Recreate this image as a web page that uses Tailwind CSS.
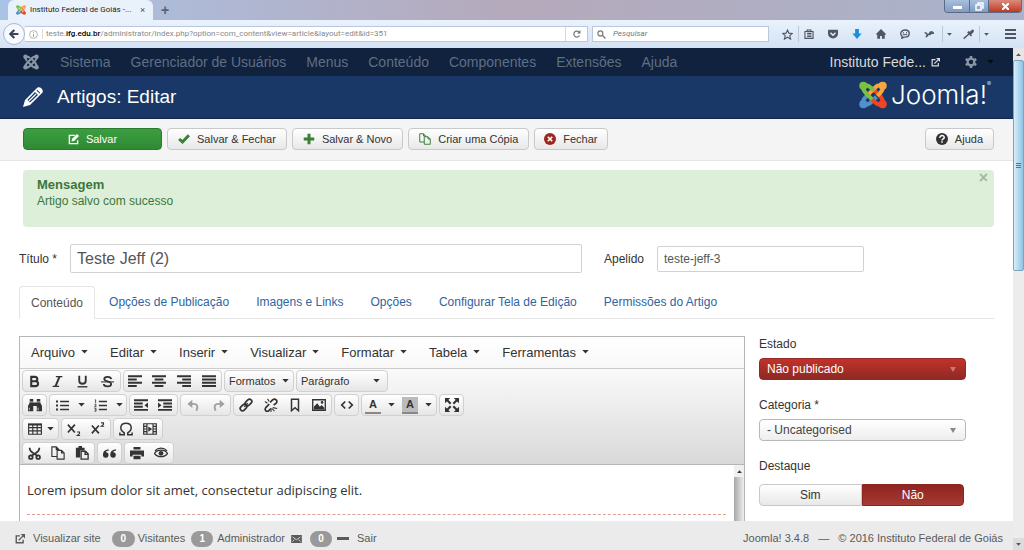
<!DOCTYPE html>
<html lang="pt-BR">
<head>
<meta charset="utf-8">
<title>Instituto Federal de Goiás - Artigos: Editar</title>
<script src="https://cdn.jsdelivr.net/npm/@tailwindcss/browser@4"></script>
</head>
<body class="flex h-screen flex-col overflow-hidden bg-white font-['Liberation_Sans',Arial,sans-serif] text-xs text-[#333]">

<svg class="hidden" xmlns="http://www.w3.org/2000/svg">
  <symbol id="joomla" viewBox="0 0 32 32">
    <g fill="none" stroke="currentColor" stroke-width="4">
      <path d="M5 26 C4 21 6 20 9 17 L18 8 M5 27 C10 28 12 26 14 24 L23 15 M27 27 C22 28 20 26 18 24 L9 15 M27 26 C28 21 26 20 24 17 L15 8"/>
      <path d="M27 6 C28 10 26 12 24 14 M27 5 C21 4 20 6 17 9 M5 5 C10 4 12 6 14 8 M5 6 C4 10 6 12 8 14"/>
    </g>
    <g fill="currentColor"><circle cx="5" cy="5.500" r="4.500"/><circle cx="27" cy="5.500" r="4.500"/><circle cx="5" cy="26.500" r="4.500"/><circle cx="27" cy="26.500" r="4.500"/></g>
  </symbol>
  <symbol id="joomla-color" viewBox="0 0 32 32">
    <g fill="none" stroke-width="4.600">
      <path stroke="#5091cd" d="M5 26 C4 21 6 20 9 17 L11 15 M5 27 C10 28 12 26 14 24 L20 18"/>
      <path stroke="#f44321" d="M27 27 C22 28 20 26 18 24 L14 20 M27 26 C28 21 26 20 24 17 L18 11"/>
      <path stroke="#f9a541" d="M27 6 C28 10 26 12 24 14 L21 17 M27 5 C21 4 20 6 17 9 L11 15"/>
      <path stroke="#7ac143" d="M5 5 C10 4 12 6 14 8 L17 11 M5 6 C4 10 6 12 8 14 L15 21"/>
    </g>
    <circle cx="5" cy="5.500" r="4.700" fill="#7ac143"/><circle cx="27" cy="5.500" r="4.700" fill="#f9a541"/><circle cx="5" cy="26.500" r="4.700" fill="#5091cd"/><circle cx="27" cy="26.500" r="4.700" fill="#f44321"/>
  </symbol>
  <symbol id="caret" viewBox="0 0 8 5"><path fill="currentColor" d="M0 0h8L4 4.500z"/></symbol>
  <symbol id="external" viewBox="0 0 16 16"><path fill="none" stroke="currentColor" stroke-width="2.200" d="M8 3H2v11h11V9M6 10l7-7"/><path fill="currentColor" d="M9 0h7v7z"/></symbol>
  <symbol id="gear" viewBox="0 0 16 16"><circle cx="8" cy="8" r="4.500" fill="none" stroke="currentColor" stroke-width="3"/><path stroke="currentColor" stroke-width="3.400" d="M8 0v3M8 13v3M1 4l2.600 1.500M12.400 10.500L15 12M1 12l2.600-1.500M12.400 5.500L15 4"/></symbol>
  <symbol id="pencil" viewBox="0 0 20 20"><path fill="currentColor" fill-rule="evenodd" d="M0 20l2-7L13.500 1.500c1.500-2 3.500-1.500 5 0s2 3.500 0 5L7 18zM4.500 13l2.500 2.500L15 8l-3-3zM13.500 3.500l3 3 .7-.7-3-3z"/><path stroke="currentColor" stroke-width="1.200" d="M6 14l7-7"/></symbol>
  <symbol id="edit" viewBox="0 0 16 16"><path fill="none" stroke="currentColor" stroke-width="2" d="M10 2H2v12h12V9"/><path fill="currentColor" d="M5 11l1-4 7-7 3 3-7 7z"/></symbol>
  <symbol id="check" viewBox="0 0 16 16"><path fill="none" stroke="currentColor" stroke-width="4" d="M1.500 8L6 12 14.500 3"/></symbol>
  <symbol id="plus" viewBox="0 0 16 16"><path stroke="currentColor" stroke-width="4" d="M8 1v14M1 8h14"/></symbol>
  <symbol id="copy" viewBox="0 0 16 16"><path fill="none" stroke="currentColor" stroke-width="1.300" d="M7 12H1V1h5l3 3v1M6 1v3h3M7 5h5l3 3v7H7zM12 5v3h3"/></symbol>
  <symbol id="cancel" viewBox="0 0 16 16"><circle cx="8" cy="8" r="8" fill="currentColor"/><path stroke="#fff" stroke-width="2.200" d="M5 5l6 6M11 5l-6 6"/></symbol>
  <symbol id="help" viewBox="0 0 16 16"><circle cx="8" cy="8" r="8" fill="currentColor"/><path fill="none" stroke="#fff" stroke-width="2" d="M5.200 6.500C5 2.500 11 2.500 11 6c0 2-3 1.500-3 4M8 11v2"/></symbol>
  <symbol id="bold" viewBox="0 0 16 16"><path fill="none" stroke="currentColor" stroke-width="2.600" d="M4 2.300h4.500c4 0 4 5.400 0 5.400H4zM4 7.700h5c4.500 0 4.500 6 0 6H4z"/></symbol>
  <symbol id="italic" viewBox="0 0 16 16"><path fill="none" stroke="currentColor" stroke-width="1.800" d="M6 2h8M2 14h8"/><path stroke="currentColor" stroke-width="2.400" d="M10.500 2l-5 12"/></symbol>
  <symbol id="underline" viewBox="0 0 16 16"><path fill="none" stroke="currentColor" stroke-width="2.300" d="M4 1v6c0 5 8 5 8 0V1"/><path stroke="currentColor" stroke-width="1.700" d="M2 14.500h12"/></symbol>
  <symbol id="strike" viewBox="0 0 16 16"><path fill="none" stroke="currentColor" stroke-width="2.200" d="M12.500 5C12 1 4 1.500 4 5c0 3.500 8.500 2 8.500 6 0 4-9 4-9 0"/><path stroke="currentColor" stroke-width="1.300" d="M0 8.500h16"/></symbol>
  <symbol id="al" viewBox="0 0 16 16"><path stroke="currentColor" stroke-width="2.300" d="M0 2.500h16M0 6.200h10M0 9.900h16M0 13.600h10"/></symbol>
  <symbol id="ac" viewBox="0 0 16 16"><path stroke="currentColor" stroke-width="2.300" d="M0 2.500h16M3 6.200h10M0 9.900h16M3 13.600h10"/></symbol>
  <symbol id="ar" viewBox="0 0 16 16"><path stroke="currentColor" stroke-width="2.300" d="M0 2.500h16M6 6.200h10M0 9.900h16M6 13.600h10"/></symbol>
  <symbol id="aj" viewBox="0 0 16 16"><path stroke="currentColor" stroke-width="2.300" d="M0 2.500h16M0 6.200h16M0 9.900h16M0 13.600h16"/></symbol>
  <symbol id="find" viewBox="0 0 16 16"><path fill="currentColor" d="M2 1h4v4h4V1h4v4l2 4v6h-6V9H6v6H0V9l2-4z"/><path stroke="#f4f4f4" stroke-width=".8" d="M2 4.500h4M10 4.500h4M1.500 11v3M11.500 11v3"/></symbol>
  <symbol id="ul" viewBox="0 0 16 16"><path stroke="currentColor" stroke-width="1.700" d="M5 3h11M5 8h11M5 13h11"/><path stroke="currentColor" stroke-width="2.500" d="M0 3h2.500M0 8h2.500M0 13h2.500"/></symbol>
  <symbol id="ol" viewBox="0 0 16 16"><path stroke="currentColor" stroke-width="1.700" d="M6 3h10M6 8h10M6 13h10"/><path fill="none" stroke="currentColor" d="M1 1h1v4M.5 6.500h2v1.500l-2 1.500h2.500M.5 11.500h2v3.500h-2M1 13.300h1.500"/></symbol>
  <symbol id="outdent" viewBox="0 0 16 16"><path stroke="currentColor" stroke-width="2.200" d="M0 2.500h16M0 6.200h10M0 9.900h10M0 13.600h16"/><path fill="currentColor" d="M16 5v6.500l-4-3.200z"/></symbol>
  <symbol id="indent" viewBox="0 0 16 16"><path stroke="currentColor" stroke-width="2.200" d="M0 2.500h16M6 6.200h10M6 9.900h10M0 13.600h16"/><path fill="currentColor" d="M0 5v6.500l4-3.200z"/></symbol>
  <symbol id="undo" viewBox="0 0 16 16"><path fill="none" stroke="currentColor" stroke-width="2.400" d="M4 6h4c5 0 6 4 3.500 8.500"/><path fill="currentColor" d="M6.500 1v10L.5 6z"/></symbol>
  <symbol id="redo" viewBox="0 0 16 16"><path fill="none" stroke="currentColor" stroke-width="2.400" d="M12 6H8c-5 0-6 4-3.500 8.500"/><path fill="currentColor" d="M9.500 1v10l6-5z"/></symbol>
  <symbol id="link" viewBox="0 0 16 16"><g fill="none" stroke="currentColor" stroke-width="1.900"><rect x="-4" y="-2.600" width="8.500" height="5.200" rx="2.600" transform="translate(5 11) rotate(-45)"/><rect x="-4.500" y="-2.600" width="8.500" height="5.200" rx="2.600" transform="translate(11 5) rotate(-45)"/><path d="M6 10l4-4"/></g></symbol>
  <symbol id="unlink" viewBox="0 0 16 16"><path fill="none" stroke="currentColor" stroke-width="1.900" d="M7 5l3-3c3-2 6 1 4 4l-3 2M6 7L2 11c-2 3 1 5 3 4l3-3"/><path stroke="currentColor" stroke-width="1.200" d="M4 1l2 3M1 4l3 2M10 11l5 1M9 12l3 3M8 12v4"/></symbol>
  <symbol id="bookmark" viewBox="0 0 16 16"><path fill="none" stroke="currentColor" stroke-width="1.700" d="M4 1.500h8v13L8 11l-4 3.500z"/></symbol>
  <symbol id="image" viewBox="0 0 16 16"><path fill="none" stroke="currentColor" stroke-width="1.500" d="M.8 2h14.400v12H.8z"/><path fill="currentColor" d="M2 13V10l4-4 3 4 2-2 3 3v2z"/><circle cx="11.500" cy="5" r="1.500" fill="currentColor"/></symbol>
  <symbol id="code" viewBox="0 0 16 16"><path fill="none" stroke="currentColor" stroke-width="2" d="M6 4L2 8l4 4M10 4l4 4-4 4"/></symbol>
  <symbol id="full" viewBox="0 0 16 16"><path fill="currentColor" d="M0 0h6L0 6zM16 0v6l-6-6zM0 16v-6l6 6zM16 16h-6l6-6z"/><path stroke="currentColor" stroke-width="2.400" d="M2 2l4.500 4.500M14 2L9.500 6.500M2 14l4.500-4.500M14 14L9.500 9.500"/></symbol>
  <symbol id="table" viewBox="0 0 16 16"><path fill="none" stroke="currentColor" stroke-width="1.300" d="M.7 2.500h14.600v11.500H.7zM1 6.500h14M1 10.200h14M5.500 3v11M10.500 3v11"/><path stroke="currentColor" stroke-width="2" d="M0 3h16"/></symbol>
  <symbol id="sub" viewBox="0 0 16 16"><path fill="none" stroke="currentColor" stroke-width="1.900" d="M1 3l8 9M9 3l-8 9"/><path fill="none" stroke="currentColor" stroke-width="1.200" d="M11.500 11.500h2.800v1.700l-2.600 2.200h3.300"/></symbol>
  <symbol id="sup" viewBox="0 0 16 16"><path fill="none" stroke="currentColor" stroke-width="1.900" d="M1 4l8 9M9 4l-8 9"/><path fill="none" stroke="currentColor" stroke-width="1.200" d="M11.500 1h2.800v1.700l-2.600 2.200h3.300"/></symbol>
  <symbol id="omega" viewBox="0 0 16 16"><path fill="none" stroke="currentColor" stroke-width="1.700" d="M1 12v2.500h5v-2C0 9 1 1.500 8 1.500s8 7.500 2 11v2h5V12"/></symbol>
  <symbol id="video" viewBox="0 0 16 16"><path fill="none" stroke="currentColor" stroke-width="1.400" d="M.8 2h14.400v12H.8zM4.500 2v12M11.500 2v12M1 5h3M1 8h3M1 11h3M12 5h3M12 8h3M12 11h3"/><path fill="currentColor" d="M6 5l4.500 3L6 11z"/></symbol>
  <symbol id="cut" viewBox="0 0 16 16"><g fill="none" stroke="currentColor" stroke-width="2.200"><path d="M2 1c0 4 2 5 10 10M14 1c0 4-2 5-10 10"/><circle cx="3.500" cy="12.500" r="2.200"/><circle cx="12.500" cy="12.500" r="2.200"/></g></symbol>
  <symbol id="paste" viewBox="0 0 16 16"><path fill="currentColor" d="M1 2h3V0h4v2h3v3H6v8H1z"/><path fill="none" stroke="currentColor" stroke-width="1.500" d="M7 6h5l3 3v6H7zM11.500 6v3.500H15"/></symbol>
  <symbol id="quote" viewBox="0 0 16 16"><path fill="currentColor" d="M7 3C2 3 0 6 0 9.500a3.400 3.400 0 103.500-3C4 5 5 4.500 7 4.500zM16 3c-5 0-7 3-7 6.500a3.400 3.400 0 103.500-3c.5-1.500 1.500-2 3.500-2z"/></symbol>
  <symbol id="print" viewBox="0 0 16 16"><path fill="currentColor" d="M4 1h8v3H4zM0 5h16v7h-3v-2H3v2H0zM4 11h8v4H4z"/></symbol>
  <symbol id="eye" viewBox="0 0 16 16"><path fill="none" stroke="currentColor" stroke-width="1.400" d="M.5 8.500C4 3.500 12 3.500 15.500 8.500 12 13.500 4 13.500.5 8.500zM1 5.500C5 1.500 11 1.500 15 5.500"/><circle cx="8" cy="8.300" r="2.700" fill="currentColor"/></symbol>
  <symbol id="mail" viewBox="0 0 16 12"><path fill="currentColor" d="M0 0h16v12H0z"/><path fill="none" stroke="#ebebeb" stroke-width="1.200" d="M2 3l6 4 6-4M2 10l3-3M14 10l-3-3"/></symbol>
  <symbol id="star" viewBox="0 0 16 16"><path fill="none" stroke="currentColor" stroke-width="1.600" d="M8 1.500l2 4.500 5 .5-3.700 3.200 1.200 5L8 12l-4.500 2.700 1.200-5L1 6.500 6 6z"/></symbol>
  <symbol id="clip" viewBox="0 0 16 16"><path fill="none" stroke="currentColor" stroke-width="1.800" d="M1.500 4h13v11h-13zM5 4V1.500h6V4M5 7h7M5 9.500h7M5 12h7"/></symbol>
  <symbol id="pocket" viewBox="0 0 16 16"><path fill="currentColor" d="M1 1h14q1 0 1 1v5a8 8 0 01-16 0V2q0-1 1-1z"/><path fill="none" stroke="#e6effa" stroke-width="2.200" d="M4 6l4 4 4-4"/></symbol>
  <symbol id="down" viewBox="0 0 16 16"><path fill="currentColor" d="M5 0h6v7h4.500L8 16 .5 7H5z"/></symbol>
  <symbol id="home" viewBox="0 0 16 16"><path fill="currentColor" d="M8 0l8 8-1.500 1.500L14 9v6.500H9.500V11h-3v4.500H2V9l-.5.500L0 8z"/></symbol>
  <symbol id="chat" viewBox="0 0 16 16"><path fill="none" stroke="currentColor" stroke-width="2.200" d="M8 1.500c9 0 9 11.500 0 11.500H6l-3 2 .5-3C-1 8 2 1.500 8 1.500z"/><path stroke="currentColor" stroke-width="1.600" d="M5.500 5v2M10.500 5v2M4.500 9h7"/></symbol>
  <symbol id="spray" viewBox="0 0 16 16"><path fill="currentColor" d="M0 5h4l1 2h3l1-3 5-1v2h2v3h-4l-2 2H7l-2 3H2l2-4z"/></symbol>
  <symbol id="dropper" viewBox="0 0 16 16"><path stroke="currentColor" stroke-width="2" d="M1 14l8-7"/><path fill="currentColor" d="M6 5l2-2 2 1 2.500-2.500c1-1 2.500-1 3 0s.5 2 0 3L12 8l1 2-1.500 1z"/></symbol>
</svg>

<!-- Window frame and tab strip -->
<header class="shrink-0">
  <div class="flex h-5 items-start justify-between bg-linear-to-r from-[#a9c3e6] via-[#b5a9bb] to-[#a9b3cb]">
    <div class="flex h-5 items-center">
      <div class="ml-2 flex h-5 w-[145px] items-center gap-1 rounded-t-md bg-[#e9f1fb] px-2 font-['Roboto',sans-serif] text-[8px] text-[#222]">
        <svg class="size-[10px] shrink-0"><use href="#joomla-color"/></svg>
        <span class="grow whitespace-nowrap">Instituto Federal de Goiás -...</span>
        <button class="text-[9px] text-[#555]" aria-label="Fechar aba">×</button>
      </div>
      <button class="ml-1 px-1 text-sm font-bold text-[#5b6274]" aria-label="Nova aba">+</button>
    </div>
    <div class="mr-[2px] flex h-[13px] overflow-hidden rounded-b-sm border border-t-0 border-[#5b6b86]">
      <button class="flex w-6 items-end justify-center bg-linear-to-b from-[#a9bfdd] to-[#7f9cc4] pb-[3px]" aria-label="Minimizar"><span class="h-[3px] w-[9px] bg-white"></span></button>
      <button class="flex w-5 items-center justify-center border-x border-[#5b6b86] bg-linear-to-b from-[#a9bfdd] to-[#7f9cc4]" aria-label="Restaurar"><svg class="size-[9px]" viewBox="0 0 9 9"><path fill="none" stroke="#fff" stroke-width="1.500" d="M3 2.500V1h5v5H7M1 3h5v5H1z"/></svg></button>
      <button class="flex w-8 items-center justify-center bg-linear-to-b from-[#d98a7c] to-[#c0351c] text-white" aria-label="Fechar"><svg class="size-[7px]" viewBox="0 0 8 8"><path stroke="currentColor" stroke-width="2.400" d="M0 0l8 8M8 0L0 8"/></svg></button>
    </div>
  </div>
  <div class="flex h-[28px] items-center bg-linear-to-b from-[#eaf2fc] to-[#d3e2f4] pr-2 font-['Roboto',sans-serif] text-[8px] text-[#888]">
    <button class="ml-[3px] flex size-[22px] shrink-0 items-center justify-center rounded-full border border-[#a9b8cc] bg-[#f6f9fd] text-[#3b4252]" aria-label="Voltar"><svg class="size-[10px]" viewBox="0 0 16 16"><path fill="none" stroke="currentColor" stroke-width="3.500" d="M15 8H3M8.500 1.500L2 8l6.500 6.500"/></svg></button>
    <div class="flex h-[16px] min-w-0 grow items-center border border-l-0 border-[#b9c8da] bg-white pl-1">
      <svg class="size-[9px] shrink-0" viewBox="0 0 16 16"><circle cx="8" cy="8" r="7" fill="none" stroke="#999" stroke-width="1.300"/><path stroke="#999" stroke-width="1.600" d="M8 7v5M8 4v1.500"/></svg>
      <span class="ml-1 h-[10px] w-px bg-[#ddd]"></span>
      <span class="ml-[3px] grow truncate">teste.<b class="font-medium text-black">ifg.edu.br</b>/administrator/index.php?option=com_content&amp;view=article&amp;layout=edit&amp;id=351</span>
      <button class="flex h-full w-[22px] items-center justify-center border-l border-[#cfdbe8] text-[#777]" aria-label="Recarregar"><svg class="size-[8px]" viewBox="0 0 16 16"><path fill="none" stroke="currentColor" stroke-width="2.400" d="M12 4a6 6 0 101 7"/><path fill="currentColor" d="M15 0v7H8z"/></svg></button>
    </div>
    <label class="ml-1 flex h-[16px] w-[177px] shrink-0 items-center gap-[7px] border border-[#b9c8da] bg-white px-1">
      <svg class="size-[9px] shrink-0" viewBox="0 0 16 16"><circle cx="6" cy="6" r="4.500" fill="none" stroke="#777" stroke-width="2"/><path stroke="#777" stroke-width="2.400" d="M9.500 9.500L15 15"/></svg>
      <input class="w-full italic outline-none placeholder:text-[#777]" type="search" placeholder="Pesquisar" aria-label="Pesquisar">
    </label>
    <div class="ml-[13px] flex shrink-0 items-center text-[#4f5663]">
      <button aria-label="Favoritar"><svg class="size-[11px]"><use href="#star"/></svg></button>
      <span class="mx-[5px] h-4 w-px bg-[#b9c8da]"></span>
      <div class="flex items-center gap-[14px]">
        <button aria-label="Favoritos"><svg class="size-[10px]"><use href="#clip"/></svg></button>
        <button aria-label="Pocket"><svg class="size-[10px]"><use href="#pocket"/></svg></button>
        <button class="text-[#1c8fdc]" aria-label="Downloads"><svg class="size-[10px]"><use href="#down"/></svg></button>
        <button aria-label="Início"><svg class="size-[10px]"><use href="#home"/></svg></button>
        <button aria-label="Hello"><svg class="size-[10px]"><use href="#chat"/></svg></button>
        <button aria-label="Extensão"><svg class="size-[10px]"><use href="#spray"/></svg></button>
      </div>
      <span class="ml-[8px] h-4 w-px bg-[#b9c8da]"></span>
      <svg class="ml-1 h-[3px] w-[5px]"><use href="#caret"/></svg>
      <button class="ml-[11px]" aria-label="Conta-gotas"><svg class="size-[11px]"><use href="#dropper"/></svg></button>
      <span class="ml-[5px] h-4 w-px bg-[#b9c8da]"></span>
      <svg class="ml-1 h-[3px] w-[5px]"><use href="#caret"/></svg>
      <button class="ml-[16px]" aria-label="Menu"><svg class="h-[10px] w-[11px]" viewBox="0 0 11 10"><path stroke="currentColor" stroke-width="2" d="M0 1h11M0 5h11M0 9h11"/></svg></button>
    </div>
  </div>
</header>

<div class="flex min-h-0 grow">
<div class="flex min-w-0 grow flex-col">

  <!-- Admin navigation -->
  <nav class="flex h-[28px] shrink-0 items-center bg-[#10223e] pl-[23px] pr-[19px] text-sm text-[#5f6e84]">
    <a href="#" class="text-[#8b97a8]" aria-label="Painel"><svg class="size-4"><use href="#joomla"/></svg></a>
    <div class="ml-[21px] flex gap-[20px] whitespace-nowrap">
      <a href="#">Sistema</a><a href="#">Gerenciador de Usuários</a><a href="#">Menus</a><a href="#">Conteúdo</a><a href="#">Componentes</a><a href="#">Extensões</a><a href="#">Ajuda</a>
    </div>
    <a href="#" class="ml-auto flex items-center gap-[5px] text-[#d9d9d9]">Instituto Fede... <svg class="size-[9px]"><use href="#external"/></svg></a>
    <button class="ml-[25px] flex items-center gap-[10px] text-[#8b97a8]" aria-label="Configurações"><svg class="size-[12px]"><use href="#gear"/></svg><svg class="h-[4px] w-[7px] text-[#040a14]"><use href="#caret"/></svg></button>
  </nav>
  <div class="flex h-[43px] shrink-0 items-center border-b border-[#11264a] bg-[#1a3867] pl-[23px] pr-[22px] text-white">
    <svg class="size-5"><use href="#pencil"/></svg>
    <h1 class="ml-[14px] text-[19px]">Artigos: Editar</h1>
    <div class="ml-auto flex items-center gap-1 pb-1">
      <svg class="size-7"><use href="#joomla-color"/></svg>
      <span class="flex items-start font-['Inter',sans-serif] text-[26px] leading-7 font-light">Joomla!<sup class="text-[6px] leading-3">®</sup></span>
    </div>
  </div>

  <!-- Action toolbar -->
  <div class="flex shrink-0 items-start gap-[5px] border-b border-[#e6e6e6] bg-[#f4f4f4] pt-[9px] pr-[19px] pb-[10px] pl-[23px] text-[11px] leading-5">
    <button class="flex h-[22px] w-[139px] items-center justify-center gap-[7px] rounded-sm border border-[#2a7a2d] bg-linear-to-b from-[#3c9e40] to-[#2f8a33] text-white"><svg class="size-[11px]"><use href="#edit"/></svg>Salvar</button>
    <button class="flex h-[22px] items-center gap-[7px] rounded-sm border border-[#c9c9c9] bg-linear-to-b from-white to-[#e8e8e8] px-[10px]"><svg class="size-[12px] text-[#378137]"><use href="#check"/></svg>Salvar &amp; Fechar</button>
    <button class="flex h-[22px] items-center gap-[7px] rounded-sm border border-[#c9c9c9] bg-linear-to-b from-white to-[#e8e8e8] px-[10px]"><svg class="size-[12px] text-[#378137]"><use href="#plus"/></svg>Salvar &amp; Novo</button>
    <button class="flex h-[22px] items-center gap-[7px] rounded-sm border border-[#c9c9c9] bg-linear-to-b from-white to-[#e8e8e8] px-[10px]"><svg class="size-[12px] text-[#378137]"><use href="#copy"/></svg>Criar uma Cópia</button>
    <button class="flex h-[22px] items-center gap-[7px] rounded-sm border border-[#c9c9c9] bg-linear-to-b from-white to-[#e8e8e8] px-[9px]"><svg class="size-[12px] text-[#9d261d]"><use href="#cancel"/></svg>Fechar</button>
    <button class="ml-auto flex h-[22px] items-center gap-[7px] rounded-sm border border-[#c9c9c9] bg-linear-to-b from-white to-[#e8e8e8] px-[10px]"><svg class="size-[12px]"><use href="#help"/></svg>Ajuda</button>
  </div>

  <main class="min-h-0 grow overflow-hidden pr-[19px] pl-[19px]">
    <div class="mt-[9px] ml-1 flex h-[57px] items-start justify-between rounded-sm bg-[#ddefd8] pt-[7px] pr-[6px] pl-[14px] leading-4 text-[#3c763d]" role="alert">
      <div><h4 class="text-[13px] font-bold">Mensagem</h4><p>Artigo salvo com sucesso</p></div>
      <button class="mt-[-5px] text-base leading-3 font-bold text-[#a5b8a2]" aria-label="Fechar mensagem">×</button>
    </div>

    <div class="mt-[17px] flex h-[29px] items-center">
      <label for="titulo" class="w-[51px]">Título *</label>
      <input id="titulo" value="Teste Jeff (2)" class="h-[29px] w-[512px] rounded-xs border border-[#d2d2d2] px-[6px] text-base text-[#555] outline-none">
      <label for="apelido" class="ml-[22px] w-[53px]">Apelido</label>
      <input id="apelido" value="teste-jeff-3" class="h-[26px] w-[207px] rounded-xs border border-[#d2d2d2] px-[6px] text-[#555] outline-none">
    </div>

    <div class="mt-[13px] flex h-[33px] items-end border-b border-[#e4e4e4] whitespace-nowrap text-[#2f64a0]" role="tablist">
      <a href="#" class="-mb-px flex h-[33px] items-center rounded-t-sm border border-b-white border-[#e4e4e4] bg-white px-[11px] text-[#555]" role="tab" aria-selected="true">Conteúdo</a>
      <div class="ml-[14px] flex h-[33px] items-center gap-[27px]">
        <a href="#" role="tab">Opções de Publicação</a><a href="#" role="tab">Imagens e Links</a><a href="#" role="tab">Opções</a><a href="#" role="tab">Configurar Tela de Edição</a><a href="#" role="tab">Permissões do Artigo</a>
      </div>
    </div>

    <div class="mt-[17px] flex gap-[14px]">
      <!-- Rich text editor -->
      <section class="w-[726px] shrink-0 border border-[#b5b5b5]">
        <div class="flex h-[32px] items-center gap-[22px] border-b border-[#ccc] bg-linear-to-b from-white to-[#f8f8f8] pl-[11px] text-[13px]">
          <button class="flex items-center gap-[6px]">Arquivo <svg class="h-[4px] w-[7px]"><use href="#caret"/></svg></button>
          <button class="flex items-center gap-[6px]">Editar <svg class="h-[4px] w-[7px]"><use href="#caret"/></svg></button>
          <button class="flex items-center gap-[6px]">Inserir <svg class="h-[4px] w-[7px]"><use href="#caret"/></svg></button>
          <button class="flex items-center gap-[6px]">Visualizar <svg class="h-[4px] w-[7px]"><use href="#caret"/></svg></button>
          <button class="flex items-center gap-[6px]">Formatar <svg class="h-[4px] w-[7px]"><use href="#caret"/></svg></button>
          <button class="flex items-center gap-[6px]">Tabela <svg class="h-[4px] w-[7px]"><use href="#caret"/></svg></button>
          <button class="flex items-center gap-[6px]">Ferramentas <svg class="h-[4px] w-[7px]"><use href="#caret"/></svg></button>
        </div>
        <div class="flex h-[96px] flex-col gap-[2px] border-b border-[#b5b5b5] bg-linear-to-b from-[#fafafa] to-[#d9d9d9] pt-px pl-[2px] text-[11px]">
          <div class="flex h-[22px] gap-[2px]">
            <div class="flex rounded-sm border border-[#d0d0d0] bg-linear-to-b from-white to-[#e6e6e6]">
              <button class="grid w-[22px] place-items-center" aria-label="Negrito"><svg class="size-[13px]"><use href="#bold"/></svg></button>
              <button class="grid w-[25px] place-items-center" aria-label="Itálico"><svg class="size-[13px]"><use href="#italic"/></svg></button>
              <button class="grid w-[25px] place-items-center" aria-label="Sublinhado"><svg class="size-[13px]"><use href="#underline"/></svg></button>
              <button class="grid w-[25px] place-items-center" aria-label="Tachado"><svg class="size-[13px]"><use href="#strike"/></svg></button>
            </div>
            <div class="flex rounded-sm border border-[#d0d0d0] bg-linear-to-b from-white to-[#e6e6e6]">
              <button class="grid w-[22px] place-items-center" aria-label="Alinhar à esquerda"><svg class="size-[14px]"><use href="#al"/></svg></button>
              <button class="grid w-[25px] place-items-center" aria-label="Centralizar"><svg class="size-[14px]"><use href="#ac"/></svg></button>
              <button class="grid w-[25px] place-items-center" aria-label="Alinhar à direita"><svg class="size-[14px]"><use href="#ar"/></svg></button>
              <button class="grid w-[25px] place-items-center" aria-label="Justificar"><svg class="size-[14px]"><use href="#aj"/></svg></button>
            </div>
            <button class="flex w-[70px] items-center justify-between rounded-sm border border-[#d0d0d0] bg-linear-to-b from-white to-[#e6e6e6] px-1">Formatos <svg class="h-[4px] w-[7px]"><use href="#caret"/></svg></button>
            <button class="flex w-[92px] items-center justify-between rounded-sm border border-[#d0d0d0] bg-linear-to-b from-white to-[#e6e6e6] pr-[7px] pl-1">Parágrafo <svg class="h-[4px] w-[7px]"><use href="#caret"/></svg></button>
          </div>
          <div class="flex h-[22px] gap-[2px]">
            <button class="grid w-[25px] place-items-center rounded-sm border border-[#d0d0d0] bg-linear-to-b from-white to-[#e6e6e6]" aria-label="Localizar"><svg class="size-[14px]"><use href="#find"/></svg></button>
            <div class="flex rounded-sm border border-[#d0d0d0] bg-linear-to-b from-white to-[#e6e6e6]">
              <button class="grid w-[24px] place-items-center" aria-label="Lista"><svg class="size-[13px]"><use href="#ul"/></svg></button>
              <button class="grid w-[14px] place-items-center" aria-label="Opções de lista"><svg class="h-[4px] w-[7px]"><use href="#caret"/></svg></button>
              <button class="grid w-[24px] place-items-center" aria-label="Lista numerada"><svg class="size-[13px]"><use href="#ol"/></svg></button>
              <button class="grid w-[14px] place-items-center" aria-label="Opções de lista numerada"><svg class="h-[4px] w-[7px]"><use href="#caret"/></svg></button>
            </div>
            <div class="flex rounded-sm border border-[#d0d0d0] bg-linear-to-b from-white to-[#e6e6e6]">
              <button class="grid w-[22px] place-items-center" aria-label="Diminuir recuo"><svg class="size-[14px]"><use href="#outdent"/></svg></button>
              <button class="grid w-[25px] place-items-center" aria-label="Aumentar recuo"><svg class="size-[14px]"><use href="#indent"/></svg></button>
            </div>
            <div class="flex rounded-sm border border-[#d0d0d0] bg-linear-to-b from-white to-[#e6e6e6] text-[#a0a0a0]">
              <button class="grid w-[25px] place-items-center" aria-label="Desfazer"><svg class="size-[13px]"><use href="#undo"/></svg></button>
              <button class="grid w-[24px] place-items-center" aria-label="Refazer"><svg class="size-[13px]"><use href="#redo"/></svg></button>
            </div>
            <div class="flex rounded-sm border border-[#d0d0d0] bg-linear-to-b from-white to-[#e6e6e6]">
              <button class="grid w-[24px] place-items-center" aria-label="Link"><svg class="size-[14px]"><use href="#link"/></svg></button>
              <button class="grid w-[25px] place-items-center" aria-label="Remover link"><svg class="size-[14px]"><use href="#unlink"/></svg></button>
              <button class="grid w-[24px] place-items-center" aria-label="Âncora"><svg class="size-[14px]"><use href="#bookmark"/></svg></button>
              <button class="grid w-[24px] place-items-center" aria-label="Imagem"><svg class="size-[14px]"><use href="#image"/></svg></button>
            </div>
            <button class="grid w-[25px] place-items-center rounded-sm border border-[#d0d0d0] bg-linear-to-b from-white to-[#e6e6e6]" aria-label="Código-fonte"><svg class="size-[14px]"><use href="#code"/></svg></button>
            <div class="flex items-center rounded-sm border border-[#d0d0d0] bg-linear-to-b from-white to-[#e6e6e6] font-bold">
              <button class="mx-[3px] w-[16px] border-b-2 border-[#888] leading-[15px]" aria-label="Cor do texto">A</button>
              <button class="grid w-[15px] place-items-center" aria-label="Escolher cor do texto"><svg class="h-[4px] w-[7px]"><use href="#caret"/></svg></button>
              <button class="mx-[3px] w-[16px] border-b-2 border-[#888] bg-[#bbb] leading-[15px]" aria-label="Cor de fundo">A</button>
              <button class="grid w-[15px] place-items-center" aria-label="Escolher cor de fundo"><svg class="h-[4px] w-[7px]"><use href="#caret"/></svg></button>
            </div>
            <button class="grid w-[25px] place-items-center rounded-sm border border-[#d0d0d0] bg-linear-to-b from-white to-[#e6e6e6]" aria-label="Tela cheia"><svg class="size-[14px]"><use href="#full"/></svg></button>
          </div>
          <div class="flex h-[22px] gap-[2px]">
            <button class="flex w-[37px] items-center justify-center gap-[5px] rounded-sm border border-[#d0d0d0] bg-linear-to-b from-white to-[#e6e6e6]" aria-label="Tabela"><svg class="size-[14px]"><use href="#table"/></svg><svg class="h-[4px] w-[7px]"><use href="#caret"/></svg></button>
            <div class="flex rounded-sm border border-[#d0d0d0] bg-linear-to-b from-white to-[#e6e6e6]">
              <button class="grid w-[24px] place-items-center" aria-label="Subscrito"><svg class="size-[14px]"><use href="#sub"/></svg></button>
              <button class="grid w-[24px] place-items-center" aria-label="Sobrescrito"><svg class="size-[14px]"><use href="#sup"/></svg></button>
            </div>
            <div class="flex rounded-sm border border-[#d0d0d0] bg-linear-to-b from-white to-[#e6e6e6]">
              <button class="grid w-[24px] place-items-center" aria-label="Caractere especial"><svg class="size-[14px]"><use href="#omega"/></svg></button>
              <button class="grid w-[24px] place-items-center" aria-label="Vídeo"><svg class="size-[14px]"><use href="#video"/></svg></button>
            </div>
          </div>
          <div class="flex h-[22px] gap-[2px]">
            <div class="flex rounded-sm border border-[#d0d0d0] bg-linear-to-b from-white to-[#e6e6e6]">
              <button class="grid w-[22px] place-items-center" aria-label="Recortar"><svg class="size-[13px]"><use href="#cut"/></svg></button>
              <button class="grid w-[25px] place-items-center" aria-label="Copiar"><svg class="size-[14px]"><use href="#copy"/></svg></button>
              <button class="grid w-[24px] place-items-center" aria-label="Colar"><svg class="size-[14px]"><use href="#paste"/></svg></button>
            </div>
            <button class="grid w-[25px] place-items-center rounded-sm border border-[#d0d0d0] bg-linear-to-b from-white to-[#e6e6e6]" aria-label="Citação"><svg class="size-[13px]"><use href="#quote"/></svg></button>
            <div class="flex rounded-sm border border-[#d0d0d0] bg-linear-to-b from-white to-[#e6e6e6]">
              <button class="grid w-[24px] place-items-center" aria-label="Imprimir"><svg class="size-[14px]"><use href="#print"/></svg></button>
              <button class="grid w-[24px] place-items-center" aria-label="Visualizar"><svg class="size-[14px]"><use href="#eye"/></svg></button>
            </div>
          </div>
        </div>
        <div class="flex h-[90px]">
          <div class="grow pt-[15px] pr-2 pl-[7px] font-['Open_Sans',sans-serif] text-[13px] leading-5 text-[#333]">
            <p>Lorem ipsum dolor sit amet, consectetur adipiscing elit.</p>
            <hr class="mt-[14px] border-dashed border-[#e0a090]">
          </div>
          <div class="w-[10px] bg-[#f0f0f0]">
            <div class="grid h-[12px] place-items-center"><svg class="h-[3px] w-[5px] rotate-180"><use href="#caret"/></svg></div>
            <div class="h-[78px] bg-linear-to-r from-[#a8a8a8] to-[#efefef]"></div>
          </div>
        </div>
      </section>

      <!-- Publishing options -->
      <aside class="flex w-[207px] flex-col">
        <label for="estado" class="leading-4">Estado</label>
        <div class="relative mt-[6px]">
          <select id="estado" class="h-[22px] w-full appearance-none rounded-sm border border-[#942a25] bg-linear-to-b from-[#c2322b] to-[#8f2823] px-[7px] text-white"><option>Não publicado</option><option>Publicado</option></select>
          <svg class="pointer-events-none absolute top-[9px] right-[10px] h-[5px] w-[6px] text-[#c47a76]" viewBox="0 0 6 5"><path fill="currentColor" d="M0 0h6L3 5z"/></svg>
        </div>
        <label for="categoria" class="mt-[17px] leading-4">Categoria *</label>
        <div class="relative mt-[6px]">
          <select id="categoria" class="h-[22px] w-full appearance-none rounded-sm border border-[#b8b8b8] bg-linear-to-b from-white to-[#eee] px-[7px] text-[#444]"><option>- Uncategorised</option></select>
          <svg class="pointer-events-none absolute top-[9px] right-[10px] h-[5px] w-[6px] text-[#888]" viewBox="0 0 6 5"><path fill="currentColor" d="M0 0h6L3 5z"/></svg>
        </div>
        <span id="destaque" class="mt-[17px] leading-4">Destaque</span>
        <div class="mt-[10px] mr-[2px] flex h-[22px]" role="group" aria-labelledby="destaque">
          <button class="flex-1 rounded-l-sm border border-[#c9c9c9] bg-linear-to-b from-white to-[#e8e8e8]">Sim</button>
          <button class="flex-1 rounded-r-sm border border-[#8a2520] bg-linear-to-b from-[#8f2420] to-[#a63a34] text-white">Não</button>
        </div>
      </aside>
    </div>
  </main>

  <!-- Status bar -->
  <footer class="flex h-[29px] shrink-0 items-center bg-[#ebebeb] pt-[6px] pr-[10px] pl-[15px] text-[11px] whitespace-nowrap text-[#5a5a5a]">
    <a href="#" class="flex items-center gap-2"><svg class="size-[10px]"><use href="#external"/></svg>Visualizar site</a>
    <span class="ml-[11px] grid h-4 w-[23px] place-items-center rounded-full bg-[#999] text-[10px] font-bold text-white">0</span><span class="ml-[3px]">Visitantes</span>
    <span class="ml-[6px] grid h-4 w-[22px] place-items-center rounded-full bg-[#999] text-[10px] font-bold text-white">1</span><span class="ml-1">Administrador</span>
    <svg class="ml-[6px] h-[8px] w-[11px]"><use href="#mail"/></svg>
    <span class="ml-2 grid h-4 w-[22px] place-items-center rounded-full bg-[#999] text-[10px] font-bold text-white">0</span>
    <a href="#" class="ml-[5px] flex items-center gap-2"><span class="h-[3px] w-[12px] bg-[#5a5a5a]"></span>Sair</a>
    <p class="ml-auto">Joomla! 3.4.8 &nbsp;<span class="mx-[3px]">—</span>&nbsp; © 2016 Instituto Federal de Goiás</p>
  </footer>
</div>

<!-- Page scrollbar -->
<div class="flex w-[11px] shrink-0 flex-col bg-[#ececec] text-[#555]">
  <div class="grid h-[12px] place-items-center bg-[#e6e6e6]"><svg class="h-[3px] w-[5px] rotate-180"><use href="#caret"/></svg></div>
  <div class="grid h-[211px] place-items-center rounded-xs border border-[#7fa3bb] bg-linear-to-r from-[#d5effb] to-[#8fc3e6]"><svg class="h-[5px] w-[5px]" viewBox="0 0 5 5"><path stroke="#3c7fa8" d="M0 .5h5M0 2.500h5M0 4.500h5"/></svg></div>
  <div class="mt-auto grid h-[12px] place-items-center bg-[#dcdcdc]"><svg class="h-[3px] w-[5px]"><use href="#caret"/></svg></div>
</div>
</div>
</body>
</html>
